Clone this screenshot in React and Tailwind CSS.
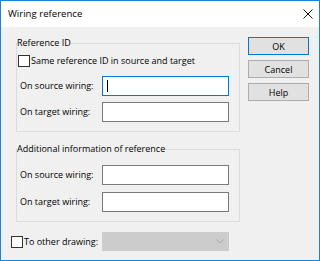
export default function App() {
	return (
		<div
			className="flex h-[261px] w-[320px] flex-col border border-[#1883d7] bg-[#f0f0f0] text-[9px] leading-[12px] text-black"
			style={{ fontFamily: '"Open Sans", "Noto Sans", sans-serif' }}
		>
			<div className="flex h-[26px] shrink-0 items-center justify-between bg-white pl-[7px] pr-[6px]">
				<span className="text-[9.6px]">Wiring reference</span>
				<svg width="10" height="10" viewBox="0 0 10 10">
					<path d="M0.5 0.5 L9.5 9.5 M9.5 0.5 L0.5 9.5" stroke="#111" strokeWidth="1" fill="none" />
				</svg>
			</div>

			<div className="flex flex-1 gap-[8px] pl-[10px] pr-[10px] pt-[10px]">
				<div className="flex w-[229px] flex-col">
					<fieldset className="ml-[5px] h-[95px] border border-[#dcdcdc] px-0">
						<legend className="px-0 leading-[12px]">Reference ID</legend>
						<label className="ml-[1px] mt-[6px] flex items-center gap-[1px]">
							<span className="h-[12px] w-[12px] border border-[#333] bg-white" />
							<span>Same reference ID in source and target</span>
						</label>
						<div className="mt-[9px] flex items-center justify-between pl-[3px] pr-[10px]">
							<span>On source wiring:</span>
							<div className="flex h-[20px] w-[127px] items-center border border-[#0078d7] bg-white pl-[4px]">
								<span className="h-[12px] w-[1px] bg-black" />
							</div>
						</div>
						<div className="mt-[6px] flex items-center justify-between pl-[3px] pr-[10px]">
							<span>On target wiring:</span>
							<div className="h-[20px] w-[127px] border border-[#7a7a7a] bg-white" />
						</div>
					</fieldset>

					<fieldset className="ml-[5px] mt-[11px] h-[79px] border border-[#dcdcdc] px-0">
						<legend className="px-0 leading-[12px]">Additional information of reference</legend>
						<div className="mt-[10px] flex items-center justify-between pl-[3px] pr-[10px]">
							<span>On source wiring:</span>
							<div className="h-[20px] w-[127px] border border-[#7a7a7a] bg-white" />
						</div>
						<div className="mt-[7px] flex items-center justify-between pl-[3px] pr-[10px]">
							<span>On target wiring:</span>
							<div className="h-[20px] w-[127px] border border-[#7a7a7a] bg-white" />
						</div>
					</fieldset>

					<div className="mt-[10px] flex items-center justify-between pr-[11px]">
						<label className="flex items-center gap-[1px]">
							<span className="h-[12px] w-[12px] border border-[#333] bg-white" />
							<span>To other drawing:</span>
						</label>
						<div className="flex h-[19px] w-[127px] items-center justify-end bg-[#cccccc] pr-[5px]">
							<svg width="8" height="5" viewBox="0 0 8 5">
								<path d="M0.5 0.5 L4 4 L7.5 0.5" stroke="#a6a6a6" strokeWidth="1" fill="none" />
							</svg>
						</div>
					</div>
				</div>

				<div className="flex flex-col gap-[5px]">
					<button className="h-[18px] w-[61px] border border-[#0078d7] bg-[#e1e1e1] text-[9px] leading-none">OK</button>
					<button className="h-[18px] w-[61px] border border-[#adadad] bg-[#e1e1e1] text-[9px] leading-none">Cancel</button>
					<button className="h-[18px] w-[61px] border border-[#adadad] bg-[#e1e1e1] text-[9px] leading-none">Help</button>
				</div>
			</div>
		</div>
	);
}
